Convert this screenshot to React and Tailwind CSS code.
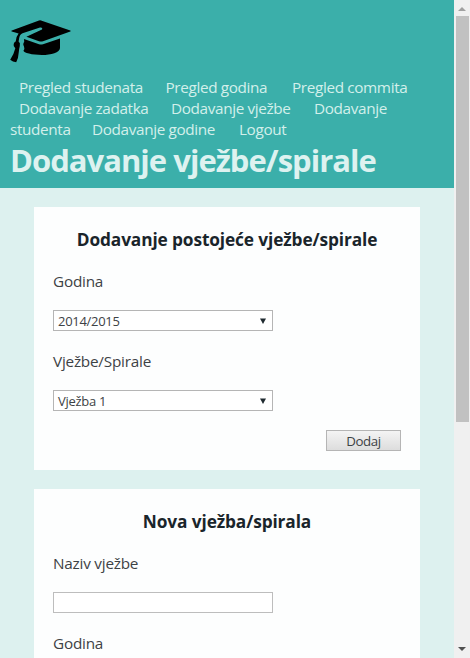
import React from "react";

function GraduationCap() {
  return (
    <svg width="62" height="44" viewBox="0 0 62 44" className="block">
      <path
        fill="#000"
        d="M31 .5 60.3 10.6Q61.2 11 60.3 11.4L33 21.2Q31 21.9 29 21.2L16.4 16.8 32 9.6Q32.8 8.8 31.7 7.8Q31 7.3 30 7.6L12.5 13.3Q9.8 14.4 9.1 18.5L8.6 21.6Q10.6 23 9.8 26Q9 29 8.8 32Q8.5 38 6.2 42.2Q2.8 42.2.2 39.8Q4 34 5.3 28.2Q3 26.5 3.7 24Q4.3 22 5.7 21.6Q6.1 16.4 8.6 13.5L1.8 11.4Q.6 10.9 1.8 10.5L29 .6Q30 .2 31 .5Z"
      />
      <path
        fill="#000"
        d="M14 19 29 24.2Q31 24.9 33 24.2L50 18.4V28C50 32.5 41 35 32 35C22 35 13.5 33 13.5 30.6Q15 29 14 26.4Q12.8 25 13.5 23Q14.6 22 14 19Z"
      />
    </svg>
  );
}

function SelectBox({ value }) {
  return (
    <div className="flex h-[21px] w-[220px] items-center justify-between border border-[#b5b5b5] bg-white pl-1 pr-[6px]">
      <span className="whitespace-nowrap pt-px text-[13px] leading-[18px] tracking-[-0.3px] text-[#3d4245]">{value}</span>
      <svg width="6" height="6" viewBox="0 0 6 6">
        <path d="M0 .5H6L3 6Z" fill="#1f2a30" />
      </svg>
    </div>
  );
}

function Label({ children }) {
  return (
    <div className="h-[21px] whitespace-nowrap text-[15.3px] leading-[21px] tracking-[-0.22px]">{children}</div>
  );
}

function Title({ children }) {
  return (
    <h3 className="h-[25px] whitespace-nowrap text-center text-[17.3px] font-bold leading-[25px] tracking-[-0.12px] text-[#1a252b]">
      {children}
    </h3>
  );
}

export default function App() {
  return (
    <div className="flex h-[658px] w-[470px] overflow-hidden bg-[#ddf1ef] font-['Open_Sans','Noto_Sans',sans-serif] text-[#3d4245]">
      <main className="flex w-[454px] flex-col">
        <header className="h-[188px] shrink-0 bg-[#3bafaa] pl-[10px] pt-5 text-[#d3efeb]">
          <GraduationCap />
          <nav className="mt-[13px] whitespace-nowrap text-[15.3px] leading-[21px] tracking-[-0.36px]">
            <div className="flex pl-[9px]">
              <a className="w-[146.5px]">Pregled studenata</a>
              <a className="w-[126.5px]">Pregled godina</a>
              <a>Pregled commita</a>
            </div>
            <div className="flex pl-[9px]">
              <a className="w-[152px]">Dodavanje zadatka</a>
              <a className="w-[143px]">Dodavanje vježbe</a>
              <a>Dodavanje</a>
            </div>
            <div className="flex">
              <a className="w-[82px]">studenta</a>
              <a className="w-[147px]">Dodavanje godine</a>
              <a>Logout</a>
            </div>
          </nav>
          <h1 className="-mt-px whitespace-nowrap text-[31px] font-bold leading-[42px] tracking-[-0.98px] text-[#ddf2f0]">
            Dodavanje vježbe/spirale
          </h1>
        </header>
        <section className="ml-[34px] mt-[19px] flex h-[263px] w-[386px] shrink-0 flex-col bg-[#fdfefe] px-[19px] pt-5">
          <Title>Dodavanje postojeće vježbe/spirale</Title>
          <div className="mt-[19px]"><Label>Godina</Label></div>
          <div className="mt-[18px]"><SelectBox value="2014/2015" /></div>
          <div className="mt-5"><Label>Vježbe/Spirale</Label></div>
          <div className="mt-[18px]"><SelectBox value="Vježba 1" /></div>
          <button className="mt-[19px] h-[21px] w-[75px] self-end border border-[#b5b5b5] bg-linear-to-b from-[#f4f4f4] to-[#dddddd] pt-px text-[13.3px] leading-[18px] tracking-[-0.4px]">
            Dodaj
          </button>
        </section>
        <section className="ml-[34px] mt-[19px] flex h-[169px] w-[386px] shrink-0 flex-col overflow-hidden bg-[#fdfefe] px-[19px] pt-5">
          <Title>Nova vježba/spirala</Title>
          <div className="mt-[19px]"><Label>Naziv vježbe</Label></div>
          <input className="mt-[18px] block h-[21px] w-[220px] shrink-0 border border-[#bdbdbd] bg-white" />
          <div className="mt-5"><Label>Godina</Label></div>
        </section>
      </main>
      <aside className="flex w-4 flex-col items-center justify-between bg-[#f0f0f0]">
        <div className="flex flex-col items-center">
          <svg width="8" height="4" viewBox="0 0 8 4" className="mt-[7px]">
            <path d="M0 4 4 0 8 4Z" fill="#a0a0a0" />
          </svg>
          <div className="mt-[5px] h-[406px] w-[13px] bg-[#c1c1c1]" />
        </div>
        <svg width="8" height="4" viewBox="0 0 8 4" className="mb-[7px]">
          <path d="M0 0H8L4 4Z" fill="#505050" />
        </svg>
      </aside>
    </div>
  );
}
